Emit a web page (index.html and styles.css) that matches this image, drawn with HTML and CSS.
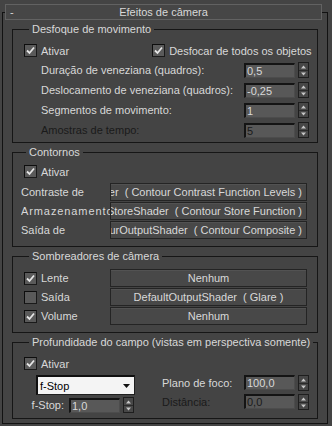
FILE: index.html
```html
<!DOCTYPE html>
<html lang="pt">
<head>
<meta charset="utf-8">
<title>Efeitos de câmera</title>
<link rel="stylesheet" href="styles.css">
</head>
<body>
<div class="panel">
  <div class="rollhead">
    <span class="minus">-</span>
    <span class="rtitle">Efeitos de câmera</span>
  </div>
  <div class="frame">

    <fieldset class="grp g1">
      <legend>Desfoque de movimento</legend>
      <div class="row chk-row">
        <span class="cb"><span class="box"><svg width="11" height="11" viewBox="0 0 11 11"><path d="M2 5.5 L4.5 8 L9 2.5" fill="none" stroke="#e6e6e6" stroke-width="1.8"/></svg></span>Ativar</span>
        <span class="cb cb-far"><span class="box"><svg width="11" height="11" viewBox="0 0 11 11"><path d="M2 5.5 L4.5 8 L9 2.5" fill="none" stroke="#e6e6e6" stroke-width="1.8"/></svg></span>Desfocar de todos os objetos</span>
      </div>
      <div class="row spin-row">
        <span class="lbl">Duração de veneziana (quadros):</span>
        <span class="field">0,5</span>
        <svg class="spin" width="11" height="16" viewBox="0 0 11 16"><rect x="0.5" y="0.5" width="10" height="15" fill="#474747" stroke="#1e1e1e"/><path d="M1 8.5h9" stroke="#2a2a2a"/><path d="M3 6.5h5l-2.5-3z" fill="#c8c8c8"/><path d="M3 10.5h5l-2.5 3z" fill="#c8c8c8"/></svg>
      </div>
      <div class="row spin-row">
        <span class="lbl">Deslocamento de veneziana (quadros):</span>
        <span class="field">-0,25</span>
        <svg class="spin" width="11" height="16" viewBox="0 0 11 16"><rect x="0.5" y="0.5" width="10" height="15" fill="#474747" stroke="#1e1e1e"/><path d="M1 8.5h9" stroke="#2a2a2a"/><path d="M3 6.5h5l-2.5-3z" fill="#c8c8c8"/><path d="M3 10.5h5l-2.5 3z" fill="#c8c8c8"/></svg>
      </div>
      <div class="row spin-row">
        <span class="lbl">Segmentos de movimento:</span>
        <span class="field">1</span>
        <svg class="spin" width="11" height="16" viewBox="0 0 11 16"><rect x="0.5" y="0.5" width="10" height="15" fill="#474747" stroke="#1e1e1e"/><path d="M1 8.5h9" stroke="#2a2a2a"/><path d="M3 6.5h5l-2.5-3z" fill="#c8c8c8"/><path d="M3 10.5h5l-2.5 3z" fill="#c8c8c8"/></svg>
      </div>
      <div class="row spin-row disabled">
        <span class="lbl">Amostras de tempo:</span>
        <span class="field">5</span>
        <svg class="spin" width="11" height="16" viewBox="0 0 11 16"><rect x="0.5" y="0.5" width="10" height="15" fill="#474747" stroke="#1e1e1e"/><path d="M1 8.5h9" stroke="#2a2a2a"/><path d="M3 6.5h5l-2.5-3z" fill="#c8c8c8"/><path d="M3 10.5h5l-2.5 3z" fill="#c8c8c8"/></svg>
      </div>
    </fieldset>

    <fieldset class="grp g2">
      <legend>Contornos</legend>
      <div class="row chk-row">
        <span class="cb"><span class="box"><svg width="11" height="11" viewBox="0 0 11 11"><path d="M2 5.5 L4.5 8 L9 2.5" fill="none" stroke="#e6e6e6" stroke-width="1.8"/></svg></span>Ativar</span>
      </div>
      <div class="btn-list">
        <div class="btn-row">
          <span class="blbl">Contraste de</span>
          <span class="btn btn-right"><span class="btxt">ContourContrastShader  ( Contour Contrast Function Levels )</span></span>
        </div>
        <div class="btn-row">
          <span class="blbl blbl-wide">Armazenamento</span>
          <span class="btn btn-right"><span class="btxt">ContourStoreShader  ( Contour Store Function )</span></span>
        </div>
        <div class="btn-row">
          <span class="blbl">Saída de</span>
          <span class="btn btn-right"><span class="btxt">ContourOutputShader  ( Contour Composite )</span></span>
        </div>
      </div>
    </fieldset>

    <fieldset class="grp g3">
      <legend>Sombreadores de câmera</legend>
      <div class="btn-list">
        <div class="btn-row">
          <span class="cb cb-lbl"><span class="box"><svg width="11" height="11" viewBox="0 0 11 11"><path d="M2 5.5 L4.5 8 L9 2.5" fill="none" stroke="#e6e6e6" stroke-width="1.8"/></svg></span>Lente</span>
          <span class="btn"><span class="btxt">Nenhum</span></span>
        </div>
        <div class="btn-row">
          <span class="cb cb-lbl"><span class="box"></span>Saída</span>
          <span class="btn"><span class="btxt">DefaultOutputShader  ( Glare )</span></span>
        </div>
        <div class="btn-row">
          <span class="cb cb-lbl"><span class="box"><svg width="11" height="11" viewBox="0 0 11 11"><path d="M2 5.5 L4.5 8 L9 2.5" fill="none" stroke="#e6e6e6" stroke-width="1.8"/></svg></span>Volume</span>
          <span class="btn"><span class="btxt">Nenhum</span></span>
        </div>
      </div>
    </fieldset>

    <fieldset class="grp g4">
      <legend>Profundidade do campo (vistas em perspectiva somente)</legend>
      <div class="row chk-row">
        <span class="cb"><span class="box"><svg width="11" height="11" viewBox="0 0 11 11"><path d="M2 5.5 L4.5 8 L9 2.5" fill="none" stroke="#e6e6e6" stroke-width="1.8"/></svg></span>Ativar</span>
      </div>
      <div class="dof">
        <div class="dof-left">
          <div class="combo"><span class="ctxt">f-Stop</span><svg class="carrow" width="7" height="4" viewBox="0 0 7 4"><path d="M0 0h7L3.5 4z" fill="#111"/></svg></div>
          <div class="row fstop-row">
            <span class="lbl-s">f-Stop:</span>
            <span class="field">1,0</span>
            <svg class="spin" width="11" height="16" viewBox="0 0 11 16"><rect x="0.5" y="0.5" width="10" height="15" fill="#474747" stroke="#1e1e1e"/><path d="M1 8.5h9" stroke="#2a2a2a"/><path d="M3 6.5h5l-2.5-3z" fill="#c8c8c8"/><path d="M3 10.5h5l-2.5 3z" fill="#c8c8c8"/></svg>
          </div>
        </div>
        <div class="dof-right">
          <div class="row spin-row">
            <span class="lbl lbl-flush">Plano de foco:</span>
            <span class="field">100,0</span>
            <svg class="spin" width="11" height="16" viewBox="0 0 11 16"><rect x="0.5" y="0.5" width="10" height="15" fill="#474747" stroke="#1e1e1e"/><path d="M1 8.5h9" stroke="#2a2a2a"/><path d="M3 6.5h5l-2.5-3z" fill="#c8c8c8"/><path d="M3 10.5h5l-2.5 3z" fill="#c8c8c8"/></svg>
          </div>
          <div class="row spin-row disabled">
            <span class="lbl lbl-flush">Distância:</span>
            <span class="field">0,0</span>
            <svg class="spin" width="11" height="16" viewBox="0 0 11 16"><rect x="0.5" y="0.5" width="10" height="15" fill="#474747" stroke="#1e1e1e"/><path d="M1 8.5h9" stroke="#2a2a2a"/><path d="M3 6.5h5l-2.5-3z" fill="#c8c8c8"/><path d="M3 10.5h5l-2.5 3z" fill="#c8c8c8"/></svg>
          </div>
        </div>
      </div>
    </fieldset>

  </div>
</div>
</body>
</html>
```

FILE: styles.css
```css
* { box-sizing: border-box; }

html, body {
  margin: 0;
  padding: 0;
  background: #444444;
}

body {
  width: 332px;
  height: 426px;
  overflow: hidden;
  font-family: "Liberation Sans", Arial, sans-serif;
  font-size: 11px;
  color: #d8d8d8;
}

.panel {
  padding-top: 4px;
}

/* rollout header */
.rollhead {
  position: relative;
  z-index: 1;
  margin-left: 5px;
  width: 317px;
  height: 16px;
  border: 1px solid #626262;
  background: #464646;
  display: flex;
  align-items: center;
}

.minus {
  width: 10px;
  padding-left: 4px;
  line-height: 14px;
}

.rtitle {
  flex: 1;
  text-align: center;
  line-height: 14px;
  padding-right: 10px;
}

/* rollout frame */
.frame {
  margin-top: -8px;
  margin-left: 2px;
  width: 326px;
  border: 1px solid #121212;
  padding: 9px 0 4px 9px;
}

/* group boxes */
.grp {
  margin: 0;
  padding: 0;
  min-width: 0;
  width: 306px;
  border: 1px solid #161616;
}

.grp + .grp {
  margin-top: 2px;
}

.grp legend {
  margin-left: 5px;
  padding: 0 3px;
  height: 14px;
  line-height: 14px;
  white-space: nowrap;
}

.g1 { padding: 7px 8px 4px 11px; }
.g2 { padding: 5px 10px 7px 8px; }
.g3 { padding: 6px 10px 7px 11px; }
.g4 { padding: 7px 8px 5px 11px; }

.row {
  display: flex;
  align-items: center;
}

/* checkboxes */
.chk-row {
  height: 15px;
}

.g2 .chk-row {
  padding-left: 3px;
}

.cb {
  display: flex;
  align-items: center;
  white-space: nowrap;
}

.cb-far {
  margin-left: 83px;
}

.box {
  width: 13px;
  height: 13px;
  margin-right: 4px;
  border: 1px solid #1a1a1a;
  border-top-color: #0e0e0e;
  border-left-color: #0e0e0e;
  background: #5a5a5a;
  display: flex;
  align-items: center;
  justify-content: center;
  flex-shrink: 0;
}

.box svg {
  display: block;
}

/* spinner rows */
.spin-row {
  height: 16px;
  margin-top: 4px;
}

.g1 .spin-row .lbl {
  margin-left: 17px;
}

.lbl {
  flex: 1;
  white-space: nowrap;
  line-height: 14px;
}

.field {
  width: 51px;
  height: 15px;
  border-top: 2px solid #141414;
  border-left: 2px solid #141414;
  border-right: 1px solid #4c4c4c;
  border-bottom: 1px solid #4c4c4c;
  background: #585858;
  padding-left: 1px;
  line-height: 12px;
  white-space: nowrap;
  flex-shrink: 0;
}

.spin {
  display: block;
  margin-left: 3px;
  flex-shrink: 0;
}

.disabled .lbl,
.disabled .field {
  color: #1a1a1a;
}

/* button rows */
.btn-list {
  display: flex;
  flex-direction: column;
  gap: 1px;
}

.g2 .btn-list {
  margin-top: 4px;
}

.btn-row {
  display: flex;
  align-items: center;
  height: 18px;
}

.blbl {
  width: 89px;
  overflow: hidden;
  white-space: nowrap;
  line-height: 14px;
}

.blbl-wide {
  letter-spacing: 0.9px;
}

.cb-lbl {
  width: 86px;
}

.btn {
  width: 197px;
  height: 18px;
  border: 1px solid #242424;
  background: #484848;
  box-shadow: inset 0 1px 0 #525252;
  display: flex;
  align-items: center;
  justify-content: center;
  overflow: hidden;
  white-space: pre;
  line-height: 14px;
}

.btn-right {
  justify-content: flex-end;
  padding-right: 4px;
}

.btxt {
  flex-shrink: 0;
  white-space: pre;
}

/* depth of field */
.dof {
  display: flex;
  margin-top: 4px;
}

.dof-left {
  width: 111px;
  display: flex;
  flex-direction: column;
  align-items: flex-end;
}

.combo {
  width: 99px;
  height: 20px;
  border-top: 2px solid #101010;
  border-left: 2px solid #101010;
  border-right: 1px solid #202020;
  border-bottom: 1px solid #202020;
  background: #f4f4f4;
  color: #000;
  display: flex;
  align-items: center;
  padding-left: 2px;
  padding-right: 4px;
}

.ctxt {
  flex: 1;
  line-height: 14px;
}

.carrow {
  display: block;
}

.fstop-row {
  height: 16px;
  margin-top: 2px;
  padding-right: 1px;
}

.lbl-s {
  margin-right: 5px;
  line-height: 14px;
}

.dof-right {
  flex: 1;
  margin-left: 27px;
}

.dof-right .spin-row {
  height: 15px;
}

.dof-right .spin-row:first-child {
  margin-top: 0;
}
```
